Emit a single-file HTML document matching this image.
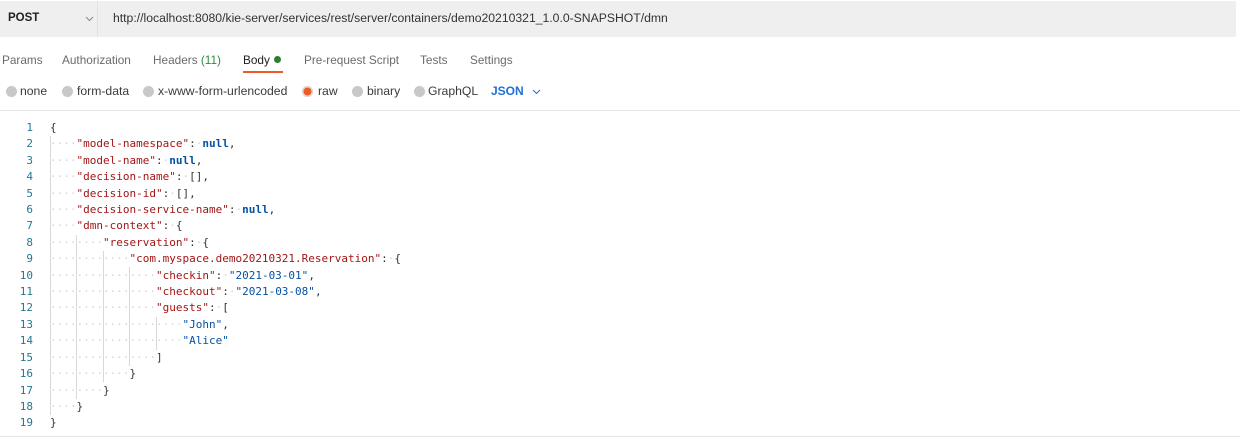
<!DOCTYPE html>
<html><head><meta charset="utf-8"><style>
*{margin:0;padding:0;box-sizing:border-box}
body{width:1240px;height:441px;background:#fff;position:relative;overflow:hidden;font-family:"Liberation Sans",Arial,sans-serif;font-size:11px;color:#212121}
.a{position:absolute;white-space:nowrap}
.bar{position:absolute;left:0;top:1px;width:1236px;height:36px;background:#efefef;border-radius:2px}
.sep{position:absolute;left:97px;top:1px;width:1px;height:36px;background:#e2e2e2}
.tab{color:#6b6b6b;top:53px;font-size:11.8px}
.rad{top:84px;color:#3a3a3a;font-size:12.2px}
.dot{position:absolute;width:11px;height:11px;border-radius:50%;background:#c8c8c8;top:86px}
.code{font-family:"DejaVu Sans Mono","Liberation Mono",monospace;font-size:11px;line-height:16.4px}
.ln{position:absolute;left:0;width:33px;text-align:right;color:#237893}
.k{color:#a31515}.s{color:#0451a5}.n{color:#0451a5;font-weight:bold}.w{color:#d4d4d4}
.g{position:absolute;width:1px;background:#d8d8d8}
pre{white-space:pre!important}
</style></head><body>
<div class="bar"></div><div class="sep"></div>
<div class="a" style="left:8px;top:12px;font-weight:bold;font-size:11.5px">POST</div>
<svg class="a" style="left:85px;top:16px" width="9" height="6"><path d="M1 1L4.5 4.5L8 1" fill="none" stroke="#888" stroke-width="1"/></svg>
<div class="a" style="left:113px;top:11px;color:#333;font-size:12.2px">http://localhost:8080/kie-server/services/rest/server/containers/demo20210321_1.0.0-SNAPSHOT/dmn</div>

<div class="a tab" style="left:2px">Params</div>
<div class="a tab" style="left:62px">Authorization</div>
<div class="a tab" style="left:153px">Headers <span style="color:#2e8b3a">(11)</span></div>
<div class="a tab" style="left:243px;color:#212121">Body</div>
<div class="a" style="left:274px;top:56px;width:7px;height:7px;border-radius:50%;background:#2e7d32"></div>
<div class="a" style="left:243px;top:71px;width:40px;height:2px;background:#ef5b25"></div>
<div class="a tab" style="left:304px">Pre-request Script</div>
<div class="a tab" style="left:420px">Tests</div>
<div class="a tab" style="left:470px">Settings</div>

<div class="dot" style="left:6px"></div><div class="a rad" style="left:20px">none</div>
<div class="dot" style="left:62px"></div><div class="a rad" style="left:77px">form-data</div>
<div class="dot" style="left:143px"></div><div class="a rad" style="left:158px">x-www-form-urlencoded</div>
<div class="dot" style="left:302px;background:#ef5b25;box-shadow:0 0 0 1.5px #ddd inset"></div><div class="a rad" style="left:318px">raw</div>
<div class="dot" style="left:352px"></div><div class="a rad" style="left:367px">binary</div>
<div class="dot" style="left:414px"></div><div class="a rad" style="left:428px">GraphQL</div>
<div class="a" style="left:491px;top:84px;color:#1f6fd6;font-weight:bold;font-size:12px">JSON</div>
<svg class="a" style="left:532px;top:89px" width="9" height="6"><path d="M1 1L4.5 4.5L8 1" fill="none" stroke="#1f6fd6" stroke-width="1"/></svg>

<div class="a" style="left:0;top:110px;width:1240px;height:1px;background:#e6e6e6"></div>
<div class="a" style="left:0;top:436px;width:1240px;height:1px;background:#e6e6e6"></div>

<div class="g" style="left:50px;top:136px;height:279px"></div>
<div class="g" style="left:76px;top:235px;height:164px"></div>
<div class="g" style="left:103px;top:251px;height:131px"></div>
<div class="g" style="left:129px;top:267px;height:99px"></div>
<div class="g" style="left:156px;top:317px;height:33px"></div>

<div class="a code" style="left:0;top:120px">
<div style="position:relative;height:311.6px;width:400px">
<div class="ln" style="top:0">1<br>2<br>3<br>4<br>5<br>6<br>7<br>8<br>9<br>10<br>11<br>12<br>13<br>14<br>15<br>16<br>17<br>18<br>19</div>
<pre class="code" style="position:absolute;left:50px;top:0;color:#333;font-family:inherit">{
<span class="w">····</span><span class="k">"model-namespace"</span>:<span class="w">·</span><span class="n">null</span>,
<span class="w">····</span><span class="k">"model-name"</span>:<span class="w">·</span><span class="n">null</span>,
<span class="w">····</span><span class="k">"decision-name"</span>:<span class="w">·</span>[],
<span class="w">····</span><span class="k">"decision-id"</span>:<span class="w">·</span>[],
<span class="w">····</span><span class="k">"decision-service-name"</span>:<span class="w">·</span><span class="n">null</span>,
<span class="w">····</span><span class="k">"dmn-context"</span>:<span class="w">·</span>{
<span class="w">········</span><span class="k">"reservation"</span>:<span class="w">·</span>{
<span class="w">············</span><span class="k">"com.myspace.demo20210321.Reservation"</span>:<span class="w">·</span>{
<span class="w">················</span><span class="k">"checkin"</span>:<span class="w">·</span><span class="s">"2021-03-01"</span>,
<span class="w">················</span><span class="k">"checkout"</span>:<span class="w">·</span><span class="s">"2021-03-08"</span>,
<span class="w">················</span><span class="k">"guests"</span>:<span class="w">·</span>[
<span class="w">····················</span><span class="s">"John"</span>,
<span class="w">····················</span><span class="s">"Alice"</span>
<span class="w">················</span>]
<span class="w">············</span>}
<span class="w">········</span>}
<span class="w">····</span>}
}</pre>
</div></div>
</body></html>
